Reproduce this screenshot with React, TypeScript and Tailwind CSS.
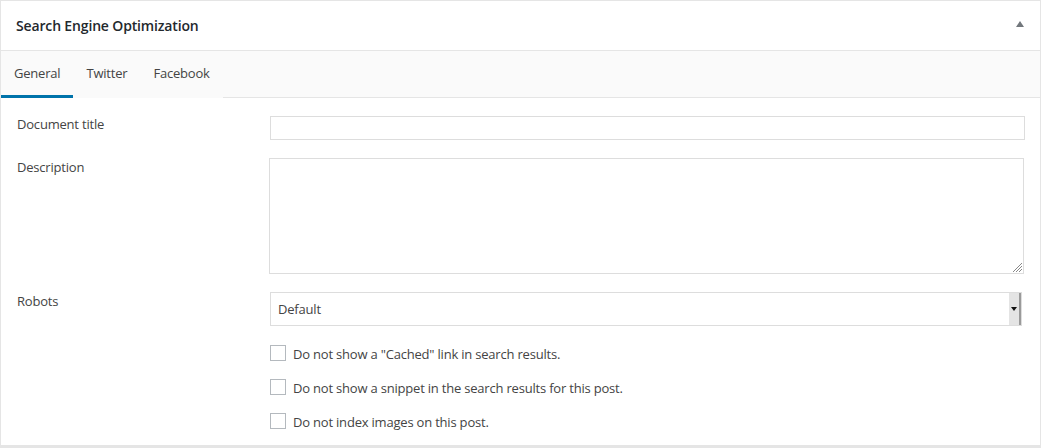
import React from 'react';

const tabs = ['General', 'Twitter', 'Facebook'];

const robotsOptions = [
  'Do not show a "Cached" link in search results.',
  'Do not show a snippet in the search results for this post.',
  'Do not index images on this post.',
];

function SelectArrow() {
  return (
    <div className="flex h-full w-[12px] items-center justify-center bg-[#e4e4e4] border-r-2 border-[#9a9a9a] bg-[radial-gradient(#d2d2d2_0.6px,transparent_0.7px)] bg-[length:2px_2px]">
      <svg width="6" height="4" viewBox="0 0 6 4">
        <path d="M0 0h6L3 4z" fill="#111" />
      </svg>
    </div>
  );
}

export default function App() {
  return (
    <div className="w-[1041px] h-[448px] bg-white font-['Open_Sans',sans-serif] text-[#444]">
      <div className="h-[448px] border border-[#e5e5e5] border-b-[3px] border-b-[#e5e5e5] flex flex-col">
        <div className="h-[50px] flex items-center justify-between pl-[15px] pr-[16px] border-b border-[#e5e5e5]">
          <h2 className="text-[14px] font-semibold tracking-[-0.15px] text-[#23282d]">Search Engine Optimization</h2>
          <svg width="8" height="6" viewBox="0 0 8 6" className="mt-[-4px]">
            <path d="M0 6L4 0l4 6z" fill="#72777c" />
          </svg>
        </div>

        <div className="flex h-[47px] bg-[#fafafa]">
          {tabs.map((t, i) => (
            <div
              key={t}
              className={`px-[13px] pt-[2px] flex items-center text-[13px] tracking-[-0.2px] text-[#444] border-b-[3px] ${
                i === 0 ? 'border-[#0073aa]' : 'border-transparent'
              }`}
            >
              {t}
            </div>
          ))}
          <div className="flex-1 border-b border-[#e5e5e5]" />
        </div>

        <div className="flex flex-col pl-[16px] pr-[15px] pt-[18px] text-[13px] tracking-[-0.2px]">
          <div className="flex">
            <div className="w-[253px] leading-[16px]">Document title</div>
            <div className="flex-1 h-[24px] border border-[#ddd]" />
          </div>

          <div className="flex mt-[18px]">
            <div className="w-[253px] pt-[1px] leading-[16px]">Description</div>
            <div className="relative flex-1 h-[116px] border border-[#ddd] ml-[-1px] mr-[1px]">
              <svg width="9" height="9" viewBox="0 0 9 9" className="absolute right-[1px] bottom-[1px]">
                <path d="M9 0L0 9M9 3L3 9M9 6L6 9" stroke="#888" strokeWidth="1" />
              </svg>
            </div>
          </div>

          <div className="flex mt-[18px]">
            <div className="w-[253px] pt-[1px] leading-[16px]">Robots</div>
            <div className="flex-1 mr-[3px] h-[34px] border border-[#ddd] flex items-stretch">
              <div className="flex-1 flex items-center pl-[7px] pt-[2px]">Default</div>
              <SelectArrow />
            </div>
          </div>

          <div className="flex flex-col gap-[18px] mt-[19px] pl-[253px]">
            {robotsOptions.map((o) => (
              <label key={o} className="flex items-center gap-[7px] h-[16px]">
                <span className="w-[16px] h-[16px] border border-[#b4b9be] bg-white shrink-0" />
                <span className="leading-[16px] pt-[1px]">{o}</span>
              </label>
            ))}
          </div>
        </div>
      </div>
    </div>
  );
}
